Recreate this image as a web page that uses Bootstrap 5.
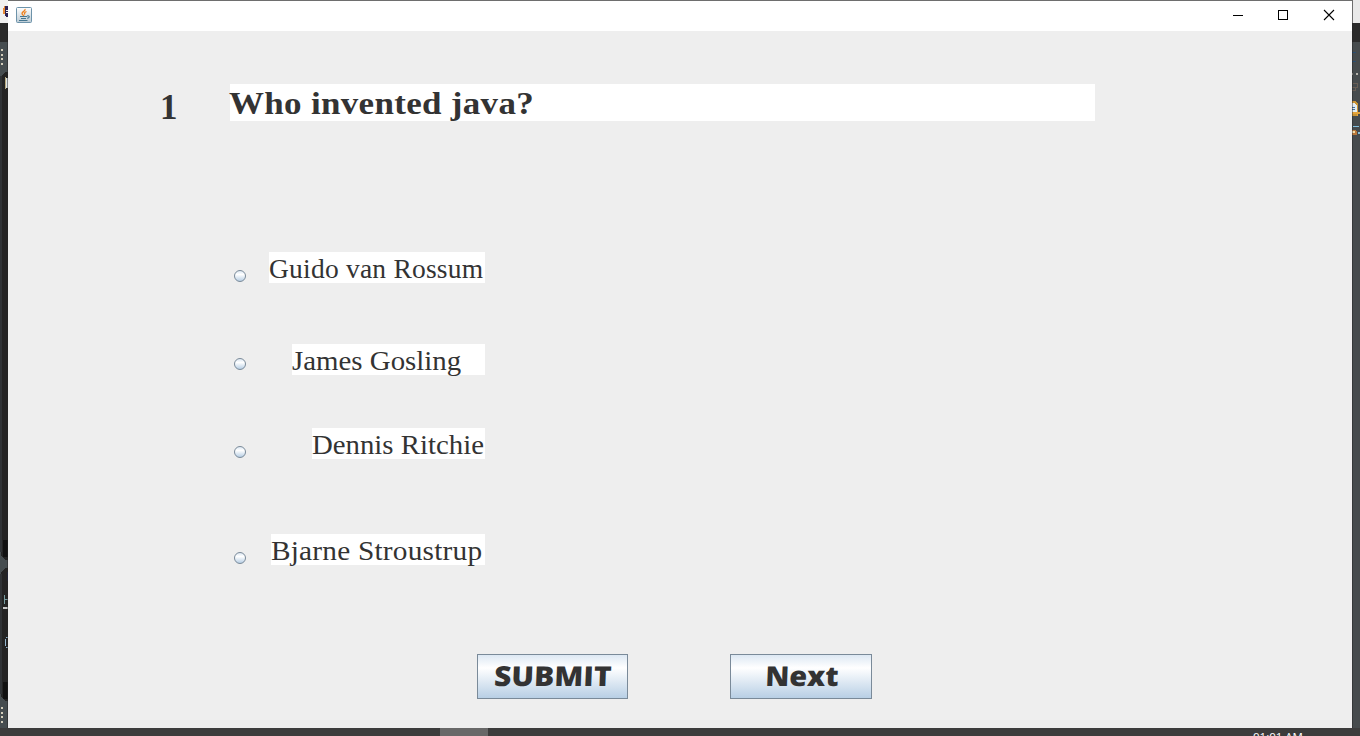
<!DOCTYPE html>
<html lang="en">
<head>
<meta charset="utf-8">
<meta name="viewport" content="width=device-width, initial-scale=1">
<title>Quiz</title>
<link href="https://cdn.jsdelivr.net/npm/bootstrap@5.3.0/dist/css/bootstrap.min.css" rel="stylesheet">
<style>
body{width:1360px;height:736px;background:#3c3c3c;color:#333}
.desk{height:728px}
.edge{width:8px;height:728px;flex:none}
.quiz-window{width:1344px;background:#eee}
.titlebar{height:31px;background:#fff;border-top:1px solid #6e6e6e;padding-left:8px}
.serif{font-family:"Liberation Serif",serif;white-space:nowrap}
.qrow{margin-top:53px;height:38px}
.qnum{width:70px;margin-left:152px;padding-top:5px;font-size:35px;line-height:38px}
.qtext{width:865px;height:37px;background:#fff;font-size:32.5px;line-height:38px;letter-spacing:.3px}
.qtext span{display:inline-block;transform:translateX(-1px) scaleX(1.076);transform-origin:0 0}
.choice{height:31px;padding-left:226px}
.answer{height:31px;background:#fff;font-size:27.5px;line-height:34px}
.choice input{appearance:none;width:12px;height:12px;margin:18px 0 0;border:1px solid #7a8a99;border-radius:50%;background:linear-gradient(#dde8f3 0,#fff 35%,#b8cfe5 100%)}
.answer span{display:inline-block;transform-origin:0 0}
.guido{margin-left:23px;width:216px;letter-spacing:.22px}
.james{margin-left:46px;width:193px}
.james span{transform:scaleX(1.05)}
.dennis{margin-left:66px;width:173px}
.dennis span{transform:scaleX(1.047)}
.bjarne{margin-left:25px;width:214px;letter-spacing:.2px}
.bjarne span{transform:scaleX(1.066)}
.actions{margin-top:89px;padding-left:469px;gap:102px}
.metal{height:45px;padding:0;border:1px solid #7a8a99;border-radius:0;background:linear-gradient(#dde8f3 0,#fff 30%,#b8cfe5 100%);color:#333;font:800 27.5px/40px "Open Sans",sans-serif}
.metal span{display:inline-block;transform:translateY(-1px) scaleX(1.09) skewX(-2deg)}
.metal .next-label{transform:translate(1px,-1px) scaleX(1.05) skewX(-2deg)}
.taskbar{height:8px;background:#3c3c3c;overflow:hidden}
.task{width:48px;height:8px;margin-left:440px;background:#686868}
.clock{margin-left:765px;font:11.5px/14px "Open Sans",sans-serif;color:#fff;padding-top:2px;white-space:nowrap}
</style>
<script src="https://cdn.jsdelivr.net/npm/bootstrap@5.3.0/dist/js/bootstrap.bundle.min.js"></script>
</head>
<body class="overflow-hidden">
<div class="desk d-flex">
  <svg class="edge" viewBox="0 0 8 728" shape-rendering="crispEdges">
    <path fill="#f0f0f0" d="M0 0h8v23H0z"/><path fill="#e88b35" d="M4 6h2v2H4zM3 8h2v6H3z"/><path fill="#2c2255" d="M5 6h3v11H6l-1-3z"/><path fill="#f4f4f8" d="M6 10h2v1H6zM6 12h2v1H6z"/>
    <path fill="#2b2b2b" d="M0 23h8v19H0z"/><path fill="#464d50" d="M0 42h8v686H0z"/>
    <path fill="#242424" d="M1 76l4-4h3v488H5l-4-4zM1 572l4-4h3v133H5l-4-4z"/>
    <path fill="#303336" d="M0 76h2v476H0zM0 574h2v120H0z"/>
    <path fill="#111" d="M3 540h5v17H3zM3 682h5v17H3z"/>
    <path fill="#d3cdbb" d="M1 49h2v2H1zM1 54h2v2H1zM1 58h2v2H1zM1 63h2v2H1zM1 707h2v2H1zM1 712h2v2H1zM1 716h2v2H1zM1 721h2v2H1z"/>
    <path fill="#b8aa80" d="M5 77h1v12H5z"/><path fill="#dde5e8" d="M6 78h2v10H6z"/>
    <path fill="#789da0" d="M4 595h1v9H4zM5 599h3v1H5z"/><path fill="#c8c8c8" d="M3 607h5v2H3z"/>
    <path fill="#94b6cf" d="M5 639h1v7H5zM6 637h2v1H6zM6 647h2v1H6z"/><path fill="#222849" d="M7 572h1v9H7z"/>
    <path fill="#222" opacity=".5" d="M7 23h1v705H7z"/>
  </svg>
  <main class="quiz-window">
    <header class="titlebar d-flex">
      <svg width="16" height="16" viewBox="0 0 16 16" style="margin-top:6px">
        <defs><linearGradient id="tile" x2="0" y2="1"><stop stop-color="#fff"/><stop offset="1" stop-color="#bccbd4"/></linearGradient></defs>
        <rect x=".5" y=".5" width="15" height="15" rx="1" fill="url(#tile)" stroke="#6d93aa"/>
        <path d="M9 2c1 2-3 2.500-3 4.500C6 7.500 7.500 8 8 9M10.500 4.500c-2 .8-2.500 1.800-1.500 3" fill="none" stroke="#ee801e" stroke-width="1.300"/>
        <path d="M4 9.500h7M5 11.500h5M3 13.500h8.500M11 9c3-1 3 2 0 2.300" fill="none" stroke="#45758f" stroke-width="1.100"/>
      </svg>
      <svg class="ms-auto" width="138" height="30" viewBox="0 0 138 30" fill="none" stroke="#000">
        <path d="M19 14.500h10M64.500 9.500h9v9h-9z" shape-rendering="crispEdges"/><path d="M110 9l10 10M120 9l-10 10" stroke-width="1.100"/>
      </svg>
    </header>
    <div class="qrow d-flex serif fw-bold"><div class="qnum">1</div><div class="qtext"><span>Who invented java?</span></div></div>
    <div class="choice d-flex serif" style="margin-top:130px"><input type="radio" name="answer"><div class="answer guido"><span>Guido van Rossum</span></div></div>
    <div class="choice d-flex serif" style="margin-top:61px"><input type="radio" name="answer" style="margin-top:14px"><div class="answer james"><span>James Gosling</span></div></div>
    <div class="choice d-flex serif" style="margin-top:53px"><input type="radio" name="answer"><div class="answer dennis"><span>Dennis Ritchie</span></div></div>
    <div class="choice d-flex serif" style="margin-top:75px"><input type="radio" name="answer"><div class="answer bjarne"><span>Bjarne Stroustrup</span></div></div>
    <div class="actions d-flex"><button class="btn metal" style="width:151px"><span>SUBMIT</span></button><button class="btn metal" style="width:142px"><span class="next-label">Next</span></button></div>
  </main>
  <svg class="edge" viewBox="0 0 8 728" shape-rendering="crispEdges">
    <path fill="#e9e9e9" d="M0 0h8v23H0z"/><path fill="#6e6e6e" d="M0 0h1v23H0z"/><path fill="#2b2b2b" d="M0 23h8v19H0z"/><path fill="#464b4d" d="M0 42h8v686H0z"/>
    <path fill="#294d70" d="M0 52h4v1H0zM0 61h4v1H0z"/><path fill="#b5b3ab" d="M4 73h2v2H4zM0 73h1v2H0z"/>
    <path fill="none" stroke="#685e55" d="M1 83.500h4.500v4H2M0 87.500h3v3H0"/>
    <path fill="#c99434" d="M0 101h3l3 3v12H0z"/><path fill="#e2edf2" d="M0 103h3l2 3v6H0z"/><path fill="#42729f" d="M0 107h3v1H0zM0 109h3v1H0z"/><path fill="#e5a43a" d="M0 112h8v2H0zM5 110h1v6H5z"/>
    <path fill="#82bfdc" d="M1 126h6v1H1zM6 132h2v2H6z"/><path fill="#b9783a" d="M0 130h3l2 2v3H0z"/><path fill="#f1dcaa" d="M0 131h3v2H0z"/>
    <path fill="#222" opacity=".45" d="M0 23h1v705H0z"/>
  </svg>
</div>
<footer class="taskbar d-flex"><div class="task"></div><div class="clock">01:01 AM</div></footer>
</body>
</html>
